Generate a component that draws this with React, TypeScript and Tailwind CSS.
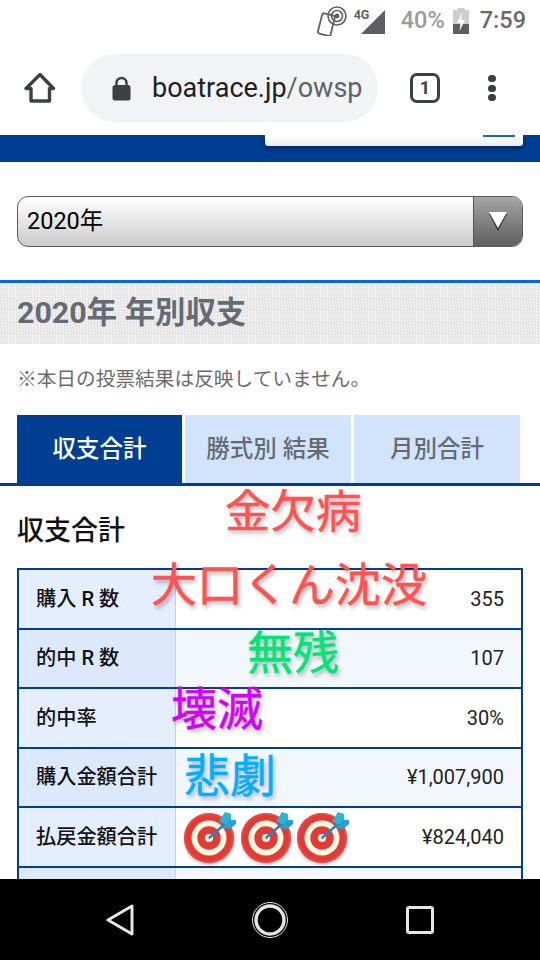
import React from "react";

const jp = "font-['Roboto','Noto_Sans_CJK_JP',sans-serif]";

function Target() {
  return (
    <svg width="54" height="56" viewBox="0 0 54 56" className="shrink-0">
      <defs>
        <filter id="tb" x="-20%" y="-20%" width="140%" height="140%">
          <feGaussianBlur stdDeviation="1.4" />
        </filter>
      </defs>
      <circle cx="25" cy="30" r="25" fill="#000" opacity="0.22" filter="url(#tb)" />
      <circle cx="25" cy="28" r="25" fill="#e53935" />
      <circle cx="25" cy="28" r="24" fill="none" stroke="#ef5350" strokeWidth="2" opacity="0.6" />
      <circle cx="25" cy="28" r="17.5" fill="#fff8e1" />
      <circle cx="25" cy="28" r="11.7" fill="#e53935" />
      <circle cx="25" cy="28" r="4" fill="#fff8e1" />
      <circle cx="25" cy="28" r="1.5" fill="#b0bec5" />
      <path d="M25 28 L43 12" stroke="#1e88c7" strokeWidth="2.4" />
      <path d="M35 11 L41 2 L47 4 L47 10 L42 15 Z" fill="#29b6d6" />
      <path d="M40 16 L46 10 L52 10 L52 14 L46 19 L38 18 Z" fill="#2a9fd0" />
    </svg>
  );
}

const rows = [
  ["購入 R 数", "355"],
  ["的中 R 数", "107"],
  ["的中率", "30%"],
  ["購入金額合計", "¥1,007,900"],
  ["払戻金額合計", "¥824,040"],
  ["", ""],
];

export default function App() {
  return (
    <div className={`relative w-[540px] h-[960px] overflow-hidden bg-white flex flex-col ${jp}`}>
      {/* Status bar */}
      <div className="h-[41px] shrink-0 flex items-center justify-end pr-[14px] text-[23.5px] font-medium">
        <svg width="34" height="30" viewBox="0 0 34 30" className="mr-[4px] mt-[1px]" fill="none" stroke="#5f5f5f">
          <rect x="4" y="8" width="13" height="21" rx="2" transform="rotate(14 10 18)" strokeWidth="1.8" fill="#fff" />
          <circle cx="21" cy="10" r="2.4" fill="#5f5f5f" stroke="none" />
          <circle cx="21" cy="10" r="5.5" strokeWidth="1.6" />
          <circle cx="21" cy="10" r="9" strokeWidth="1.6" />
        </svg>
        <div className="relative w-[32px] h-[26px] mr-[15px]">
          <span className="absolute left-0 top-[0px] text-[12.5px] font-bold leading-[14px] text-[#5f5f5f]">4G</span>
          <svg width="32" height="24" viewBox="0 0 32 24" className="absolute left-[7px] top-[2px]">
            <path d="M0 24 L24 0 L24 24 Z" fill="#5f5f5f" />
          </svg>
        </div>
        <span className="text-[#9b9b9b] leading-none">40%</span>
        <svg width="16" height="26" viewBox="0 0 16 26" className="ml-[8px] mr-[11px]">
          <rect x="4.5" y="0" width="7" height="3" fill="#cfcfcf" />
          <rect x="0" y="2" width="16" height="24" fill="#cfcfcf" />
          <rect x="0" y="16" width="16" height="10" fill="#5f5f5f" />
          <path d="M9 5 L4 15 L7.5 15 L6.5 23 L12 12 L8.5 12 Z" fill="#fff" />
        </svg>
        <span className="text-[#6a6a6a] leading-none">7:59</span>
      </div>

      {/* Browser bar */}
      <div className="h-[94px] shrink-0 flex items-start pt-[13px]">
        <svg width="32" height="32" viewBox="0 0 32 32" className="ml-[24px] mt-[18px]" fill="none" stroke="#3c4043" strokeWidth="3.4" strokeLinejoin="round">
          <path d="M2 16.5 L16 2.5 L29.5 16.5 H25.5 V29 H7 V16.5 Z" />
        </svg>
        <div className="ml-[25px] w-[297px] h-[68px] rounded-full bg-[#f1f3f4] flex items-center pl-[31px] overflow-hidden">
          <svg width="19" height="25" viewBox="0 0 19 25" className="shrink-0">
            <path d="M4.5 10 V7 a5 5 0 0 1 10 0 V10" fill="none" stroke="#3c4043" strokeWidth="2.4" />
            <rect x="0.5" y="9" width="18" height="15.5" rx="2.5" fill="#3c4043" />
          </svg>
          <span className="ml-[21px] text-[27px] leading-none whitespace-nowrap text-[#202124] font-['Roboto',sans-serif]">
            boatrace.jp<span className="text-[#5f6368]">/owsp</span>
          </span>
        </div>
        <div className="ml-[32px] mt-[19px] w-[30px] h-[30px] rounded-[7px] border-[3px] border-[#3c4043] flex items-center justify-center text-[18px] font-bold text-[#3c4043] leading-none">
          1
        </div>
        <div className="ml-[48px] mt-[21px] flex flex-col gap-[2.5px]">
          <div className="w-[8px] h-[7px] rounded-full bg-[#3c4043]" />
          <div className="w-[8px] h-[7px] rounded-full bg-[#3c4043]" />
          <div className="w-[8px] h-[7px] rounded-full bg-[#3c4043]" />
        </div>
      </div>

      {/* Page */}
      <div className="relative flex-1 min-h-0 overflow-hidden">
        {/* Blue header band */}
        <div className="h-[27px] bg-[#003e92] flex justify-end pr-[17px]">
          <div className="w-[258px] h-[11px] bg-gradient-to-b from-white to-[#ececec] rounded-b-[3px] shadow-[0_2px_6px_rgba(0,0,0,0.45)] flex justify-end pr-[8px]">
            <div className="w-[32px] h-[2px] bg-[#1a66c9]" />
          </div>
        </div>

        {/* Select */}
        <div className="mt-[34px] mx-[17px] h-[51px] rounded-[11px] border-[1.5px] border-[#5a5a5a] bg-gradient-to-b from-white to-[#cccccc] flex items-center overflow-hidden">
          <span className="flex-1 pl-[9px] text-[23.5px] text-black leading-none">2020年</span>
          <div className="w-[49px] h-full bg-gradient-to-b from-[#a6a6a6] to-[#5f5f5f] border-l border-[#555] flex items-center justify-center">
            <svg width="20" height="22" viewBox="0 0 20 22">
              <path d="M1 3 H19 L10 20 Z" fill="#333" />
              <path d="M1 1 H19 L10 17 Z" fill="#fff" />
            </svg>
          </div>
        </div>

        {/* Section heading */}
        <div className="mt-[33px] h-[64px] border-t-[3px] border-[#0068d8] bg-[repeating-conic-gradient(#e3e3e3_0_25%,#f3f3f3_0_50%)] bg-[length:3px_3px] flex items-center pl-[17px]">
          <span className="text-[30.4px] font-bold text-[#646b73] leading-none">2020年 年別収支</span>
        </div>

        {/* Note */}
        <p className="mt-[25px] pl-[17px] text-[19.7px] leading-[22px] text-[#6b6b6b]">※本日の投票結果は反映していません。</p>

        {/* Tabs */}
        <div className="mt-[24px] h-[71px] border-b-[3px] border-[#003e92] flex pl-[17px] gap-[3px]">
          <div className="w-[165px] pt-[2px] bg-[#003e92] text-white flex items-center justify-center text-[23.5px] font-medium">収支合計</div>
          <div className="w-[166px] pt-[2px] bg-[#d2e3fc] text-[#646b73] flex items-center justify-center text-[23.5px] font-medium">勝式別 結果</div>
          <div className="w-[166px] pt-[2px] bg-[#d2e3fc] text-[#646b73] flex items-center justify-center text-[23.5px] font-medium">月別合計</div>
        </div>

        {/* Title */}
        <h2 className="mt-[27px] pl-[17px] text-[27px] leading-[36px] font-medium text-[#111]">収支合計</h2>

        {/* Table */}
        <div className="mt-[19px] mx-[17px] border-t-2 border-x-2 border-[#003e92]">
          {rows.map(([label, value], i) => (
            <div key={i} className={`h-[59.5px] flex border-b-2 border-[#003e92] ${i % 2 === 0 ? "bg-white" : "bg-[#f2f7fe]"}`}>
              <div className={`w-[157px] shrink-0 pl-[17px] flex items-center text-[20.2px] font-medium text-[#111] border-r border-[#c8d0dc] ${i % 2 === 0 ? "bg-[#e4eefe]" : "bg-[#dce9fd]"}`}>
                {label}
              </div>
              <div className="flex-1 flex items-center justify-end pr-[17px] text-[20px] text-[#222]">{value}</div>
            </div>
          ))}
        </div>

        {/* Overlay stickers */}
        <span className="absolute left-[225px] top-[346px] text-[45.5px] leading-[64px] whitespace-nowrap text-[#ff5252] [-webkit-text-stroke:0.5px_#ff5252] [text-shadow:2px_3px_4px_rgba(0,0,0,0.3)]">金欠病</span>
        <span className="absolute left-[151px] top-[418px] text-[46px] leading-[64px] whitespace-nowrap text-[#ff5252] [-webkit-text-stroke:0.5px_#ff5252] [text-shadow:2px_3px_4px_rgba(0,0,0,0.3)]">大口くん沈没</span>
        <span className="absolute left-[247px] top-[486px] text-[46px] leading-[64px] whitespace-nowrap text-[#00e676] [-webkit-text-stroke:0.5px_#00e676] [text-shadow:2px_3px_4px_rgba(0,0,0,0.3)]">無残</span>
        <span className="absolute left-[171px] top-[542px] text-[46px] leading-[64px] whitespace-nowrap text-[#d500f9] [-webkit-text-stroke:0.5px_#d500f9] [text-shadow:2px_3px_4px_rgba(0,0,0,0.3)]">壊滅</span>
        <span className="absolute left-[184px] top-[609px] text-[46px] leading-[64px] whitespace-nowrap text-[#00b0ff] [-webkit-text-stroke:0.5px_#00b0ff] [text-shadow:2px_3px_4px_rgba(0,0,0,0.3)]">悲劇</span>
        <div className="absolute left-[184px] top-[675px] flex gap-[2.7px]">
          <Target />
          <Target />
          <Target />
        </div>
      </div>

      {/* Nav bar */}
      <div className="h-[81px] shrink-0 bg-black flex items-center relative z-10">
        <svg width="28" height="32" viewBox="0 0 28 32" className="ml-[106px]" fill="none" stroke="#e6e6e6" strokeWidth="3" strokeLinejoin="round">
          <path d="M26 2 V30 L2 16 Z" />
        </svg>
        <svg width="38" height="38" viewBox="0 0 38 38" className="ml-[117px]" fill="none">
          <circle cx="19" cy="19" r="17.5" stroke="#e6e6e6" strokeWidth="1" />
          <circle cx="19" cy="19" r="14" stroke="#e6e6e6" strokeWidth="3.4" />
        </svg>
        <svg width="28" height="28" viewBox="0 0 28 28" className="ml-[117px]" fill="none" stroke="#e6e6e6" strokeWidth="3" strokeLinejoin="round">
          <rect x="1.5" y="1.5" width="25" height="25" rx="1.5" />
        </svg>
      </div>
    </div>
  );
}
